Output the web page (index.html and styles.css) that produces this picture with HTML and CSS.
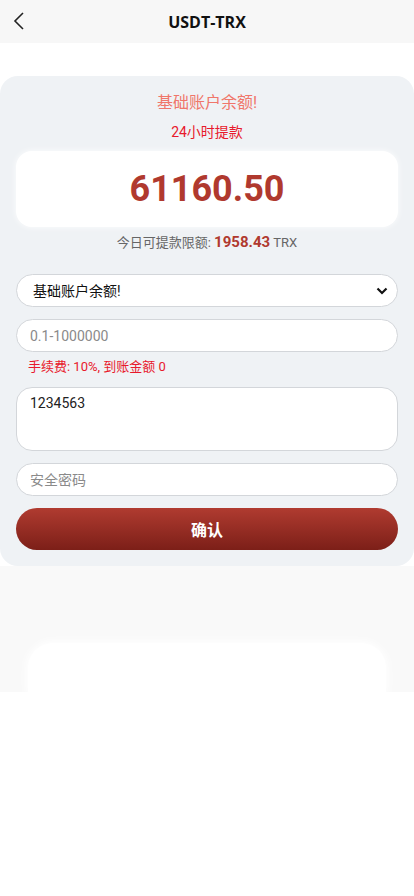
FILE: index.html
```html
<!DOCTYPE html>
<html lang="zh">
<head>
<meta charset="utf-8">
<meta name="viewport" content="width=device-width, initial-scale=1">
<link rel="stylesheet" href="styles.css">
</head>
<body>
<header class="topbar">
  <span class="back">
    <svg width="14" height="20" viewBox="0 0 14 20"><path d="M11 2 L3 10 L11 18" fill="none" stroke="#222" stroke-width="1.6"/></svg>
  </span>
  <h1 class="title">USDT-TRX</h1>
</header>
<div class="spacer"></div>
<main class="card">
  <div class="acc-name">基础账户余额!</div>
  <div class="acc-sub">24小时提款</div>
  <div class="amount-box">61160.50</div>
  <div class="limit">今日可提款限额: <b>1958.43</b> TRX</div>
  <form class="form">
    <select class="field select"><option>基础账户余额!</option></select>
    <input class="field" placeholder="0.1-1000000">
    <div class="fee">手续费: 10%, 到账金额 0</div>
    <textarea class="field area">1234563</textarea>
    <input class="field" placeholder="安全密码">
    <button type="button" class="btn">确认</button>
  </form>
</main>
<section class="bottom">
  <div class="pill"></div>
</section>
</body>
</html>
```
FILE: styles.css
```css
* { box-sizing: border-box; }
html, body { margin: 0; padding: 0; background: #fff; }
body { font-family: Roboto, "Noto Sans CJK SC", sans-serif; color: #222; }
.topbar { height: 43px; background: #f7f7f7; position: relative; display: flex; align-items: center; justify-content: center; }
.back { position: absolute; left: 12px; top: 11px; display: flex; }
.title { margin: 0; font-family: "Open Sans", "Noto Sans CJK SC", sans-serif; font-size: 16px; font-weight: 700; color: #111; }
.spacer { height: 33px; }
.card { background: #eff2f5; border-radius: 18px; padding: 16px 16px 16px; display: flex; flex-direction: column; }
.acc-name { text-align: center; color: #f0766a; font-size: 16px; line-height: 22px; }
.acc-sub { text-align: center; color: #e8192c; font-size: 14px; line-height: 20px; margin-top: 8px; }
.amount-box { margin-top: 9px; height: 76px; background: #fff; border-radius: 16px; display: flex; align-items: center; justify-content: center; font-size: 36px; font-weight: 700; color: #b0392e; box-shadow: 0 0 6px rgba(255,255,255,0.9); }
.limit { text-align: center; color: #666; font-size: 13px; line-height: 18px; margin-top: 6px; }
.limit b { color: #b0392e; font-size: 15px; }
.form { display: flex; flex-direction: column; margin-top: 22px; }
.field { width: 100%; height: 33px; border: 1px solid #d3d6da; border-radius: 17px; background: #fff; padding: 0 13px; font-family: Roboto, "Noto Sans CJK SC", sans-serif; font-size: 14px; color: #222; outline: none; margin: 0 0 12px; }
.field::placeholder { color: #8a8a8a; }
.select { appearance: none; -webkit-appearance: none; padding-left: 16px; color: #111;
  background: #fff url("data:image/svg+xml;utf8,<svg xmlns='http://www.w3.org/2000/svg' width='12' height='8' viewBox='0 0 12 8'><path d='M1.5 1.5 L6 6 L10.5 1.5' fill='none' stroke='%23111' stroke-width='2.2'/></svg>") no-repeat right 9px center; }
.fee { color: #e8192c; font-size: 13px; line-height: 18px; margin: -6px 0 11px 12px; }
.area { height: 64px; border-radius: 16px; padding: 6px 13px; resize: none; line-height: 18px; }
.btn { height: 42px; border: none; border-radius: 21px; background: linear-gradient(#b03b30, #7c1f18); color: #fff; font-family: Roboto, "Noto Sans CJK SC", sans-serif; font-size: 16px; font-weight: 700; }
.bottom { height: 126px; background: #f9f9f9; padding: 77px 28px 0; }
.pill { height: 49px; background: #fff; border-radius: 25px 25px 0 0; box-shadow: 0 0 8px 2px #fff; }
```
